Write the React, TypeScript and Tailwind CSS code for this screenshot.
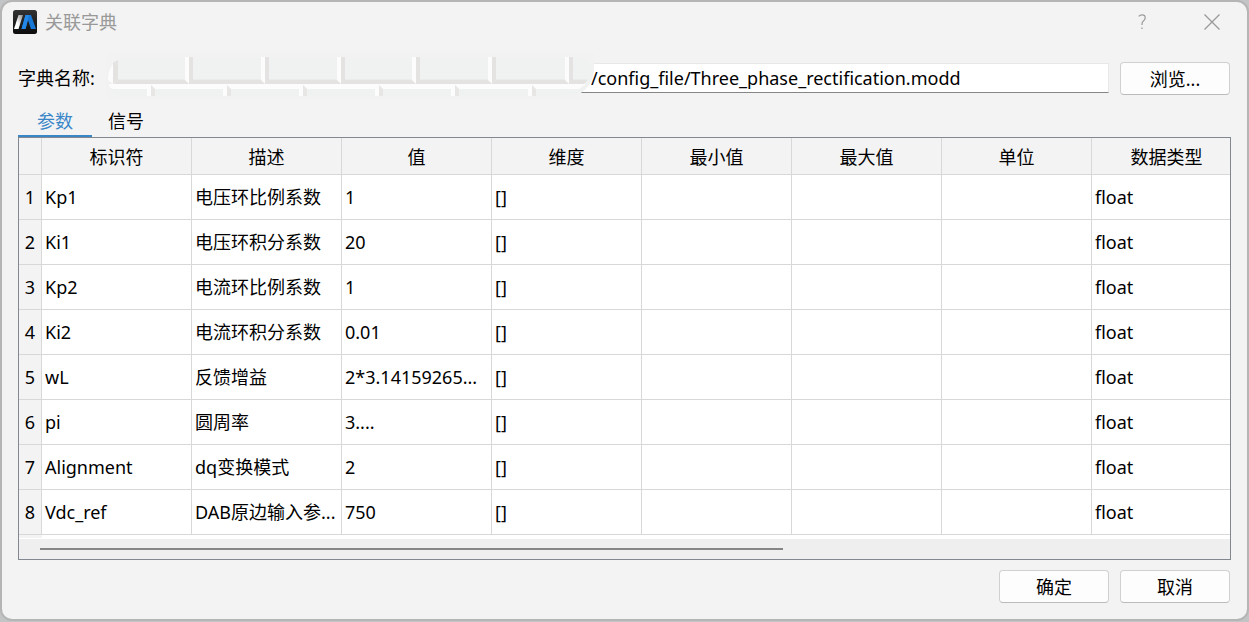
import { useState } from "react";

const columns = ["标识符", "描述", "值", "维度", "最小值", "最大值", "单位", "数据类型"];

const rows = [
  ["Kp1", "电压环比例系数", "1"],
  ["Ki1", "电压环积分系数", "20"],
  ["Kp2", "电流环比例系数", "1"],
  ["Ki2", "电流环积分系数", "0.01"],
  ["wL", "反馈增益", "2*3.14159265..."],
  ["pi", "圆周率", "3...."],
  ["Alignment", "dq变换模式", "2"],
  ["Vdc_ref", "DAB原边输入参...", "750"],
].map(([id, desc, value]) => [id, desc, value, "[]", "", "", "", "float"]);

const buttonClass =
  "h-[33px] w-[110px] shrink-0 rounded border border-[#d0d0d0] border-b-[#bbbbbb] bg-[#fdfdfd] text-center leading-6";

function Logo() {
  return (
    <svg className="size-6 shrink-0" viewBox="0 0 24 24" aria-hidden="true">
      <defs>
        <linearGradient id="base" x1="0" y1="0" x2="0" y2="1">
          <stop offset="0" stopColor="#333333" />
          <stop offset="1" stopColor="#0c0c0c" />
        </linearGradient>
        <linearGradient id="silver" x1="1" y1="0" x2="0" y2="1">
          <stop offset="0" stopColor="#8c8c8c" />
          <stop offset="0.6" stopColor="#ffffff" />
        </linearGradient>
      </defs>
      <rect width="24" height="24" rx="2.5" fill="url(#base)" />
      <path d="M5.500 5h4.500L5.500 19H1Z" fill="url(#silver)" />
      <path d="M12.5 5h5.500l5 14h-5l-3-9-2.500 9H8.500Z" fill="#1878d8" />
      <path d="M12.5 5h3.500L12.500 19h-4Z" fill="#2488e8" />
    </svg>
  );
}

const seams = [188, 264, 340, 415, 491, 568];
const lowerSeams = [150, 226, 302, 378, 454, 531];

function Cover() {
  return (
    <svg
      className="pointer-events-none absolute top-[-10px] left-0 h-[46px] w-[490px]"
      viewBox="106 53 490 46"
      aria-hidden="true"
    >
      <path d="M106 53H594V70Q593 86 579 94V99H106Z" fill="#f2f2f2" />
      <path d="M124 58H580Q591 59 593 68Q593 84 579 94L560 96H122Q109 95 109 82Q107 62 124 58Z" fill="#f0f2f1" />
      <path d="M118 79.500H588L584 84H114Z" fill="#e5e3e2" />
      <path d="M109 84H586L579 89H114Q109 89 109 84Z" fill="#fcfcfc" />
      <path d="M118 60Q108 66 108 80L113 84V62Z" fill="#fcfcfc" />
      <path d="M113 62.500L118 60V80L113 84Z" fill="#e5e3e2" />
      {seams.map((x) => (
        <g key={x}>
          <path d={`M${x - 3} 57H${x + 1}V84L${x - 3} 80Z`} fill="#fcfcfc" />
          <path d={`M${x + 1} 57H${x + 5}V80L${x + 1} 84Z`} fill="#e5e3e2" />
        </g>
      ))}
      {lowerSeams.map((x) => (
        <g key={x}>
          <path d={`M${x - 3} 87H${x + 1}V96H${x - 3}Z`} fill="#fcfcfc" />
          <path d={`M${x + 1} 85L${x + 5} 89V96H${x + 1}Z`} fill="#e8e6e5" />
        </g>
      ))}
    </svg>
  );
}

export default function App() {
  const [tab, setTab] = useState("参数");
  const [path, setPath] = useState("/config_file/Three_phase_rectification.modd");

  return (
    <div className="flex min-h-screen flex-col bg-[#c2c4c5] pb-px font-['Noto_Sans','Noto_Sans_CJK_SC',sans-serif] text-lg text-black">
      <main className="flex flex-1 flex-col rounded-xl border-2 border-[#b5b5b5] bg-[#f3f3f3]">
        <header className="flex h-10 shrink-0 items-center gap-2 pr-[27px] pl-[11px]">
          <Logo />
          <h1 className="flex-1 leading-6 text-[#999999]">关联字典</h1>
          <button className="mr-[50px] text-[#999999]" aria-label="帮助">
            <svg className="h-4 w-2" viewBox="0 0 8 16" fill="none" stroke="currentColor" strokeWidth="1.2">
              <path d="M.7 2.4Q2 .8 4 .8q3.2 0 3.2 3 0 1.8-1.8 3.1Q4 8.100 4 10v1M4 13.500V15" />
            </svg>
          </button>
          <button className="text-[#999999]" aria-label="关闭">
            <svg className="size-4" viewBox="0 0 16 16" fill="none" stroke="currentColor" strokeWidth="1.3">
              <path d="M.5.5 15.500 15.500M15.500.5.5 15.500" />
            </svg>
          </button>
        </header>

        <div className="flex flex-1 flex-col px-4 pt-5 pb-4">
          <div className="flex items-start pr-px">
            <label htmlFor="dictionary" className="w-[88px] shrink-0 overflow-hidden leading-[33px] whitespace-nowrap">
              字典名称:
            </label>
            <div className="relative mt-px mr-[11px] flex-1">
              <input
                id="dictionary"
                value={path}
                onChange={(e) => setPath(e.target.value)}
                className="block h-[30px] w-full border border-[#e8e8e8] border-b-[#868686] bg-white pl-[484px] outline-none"
              />
              <Cover />
            </div>
            <button className={buttonClass}>浏览...</button>
          </div>

          <div className="mt-3 flex" role="tablist">
            {["参数", "信号"].map((name) => (
              <button
                key={name}
                role="tab"
                aria-selected={tab === name}
                onClick={() => setTab(name)}
                className={
                  tab === name
                    ? "h-[30px] w-[74px] border-b-2 border-[#3a87c8] leading-6 text-[#3a87c8]"
                    : "h-[30px] w-[68px] border-b-2 border-transparent leading-6"
                }
              >
                {name}
              </button>
            ))}
          </div>

          <div className="flex flex-1 flex-col border border-[#828790] bg-white">
            <div className="flex-1 overflow-hidden">
              <table className="w-[1223px] table-fixed border-separate border-spacing-0">
                <thead>
                  <tr className="h-[37px] bg-[#f3f3f3]">
                    <th className="w-[23px] border-r border-b border-[#d8d8d8]" />
                    {columns.map((name) => (
                      <th
                        key={name}
                        className="w-[150px] border-r border-b border-[#d8d8d8] p-0 pt-0.5 font-normal leading-6"
                      >
                        {name}
                      </th>
                    ))}
                  </tr>
                </thead>
                <tbody>
                  {rows.map((row, i) => (
                    <tr key={row[0]} className="h-[45px]">
                      <th className="border-r border-b border-[#d8d8d8] bg-[#f3f3f3] p-0 font-normal leading-6">
                        {i + 1}
                      </th>
                      {row.map((cell, j) => (
                        <td
                          key={j}
                          className="overflow-hidden border-r border-b border-[#d8d8d8] p-0 pl-[3px] leading-6 whitespace-nowrap"
                        >
                          {cell}
                        </td>
                      ))}
                    </tr>
                  ))}
                </tbody>
              </table>
              <div className="h-[3px] w-[23px] bg-[#f3f3f3]" />
            </div>
            <div className="flex h-5 items-center bg-[#efefef] pl-[21px]">
              <div className="h-0.5 w-[62.4%] bg-[#868686]" />
            </div>
          </div>

          <div className="mt-[10px] flex justify-end gap-[11px] pr-px">
            <button className={buttonClass}>确定</button>
            <button className={buttonClass}>取消</button>
          </div>
        </div>
      </main>
    </div>
  );
}
